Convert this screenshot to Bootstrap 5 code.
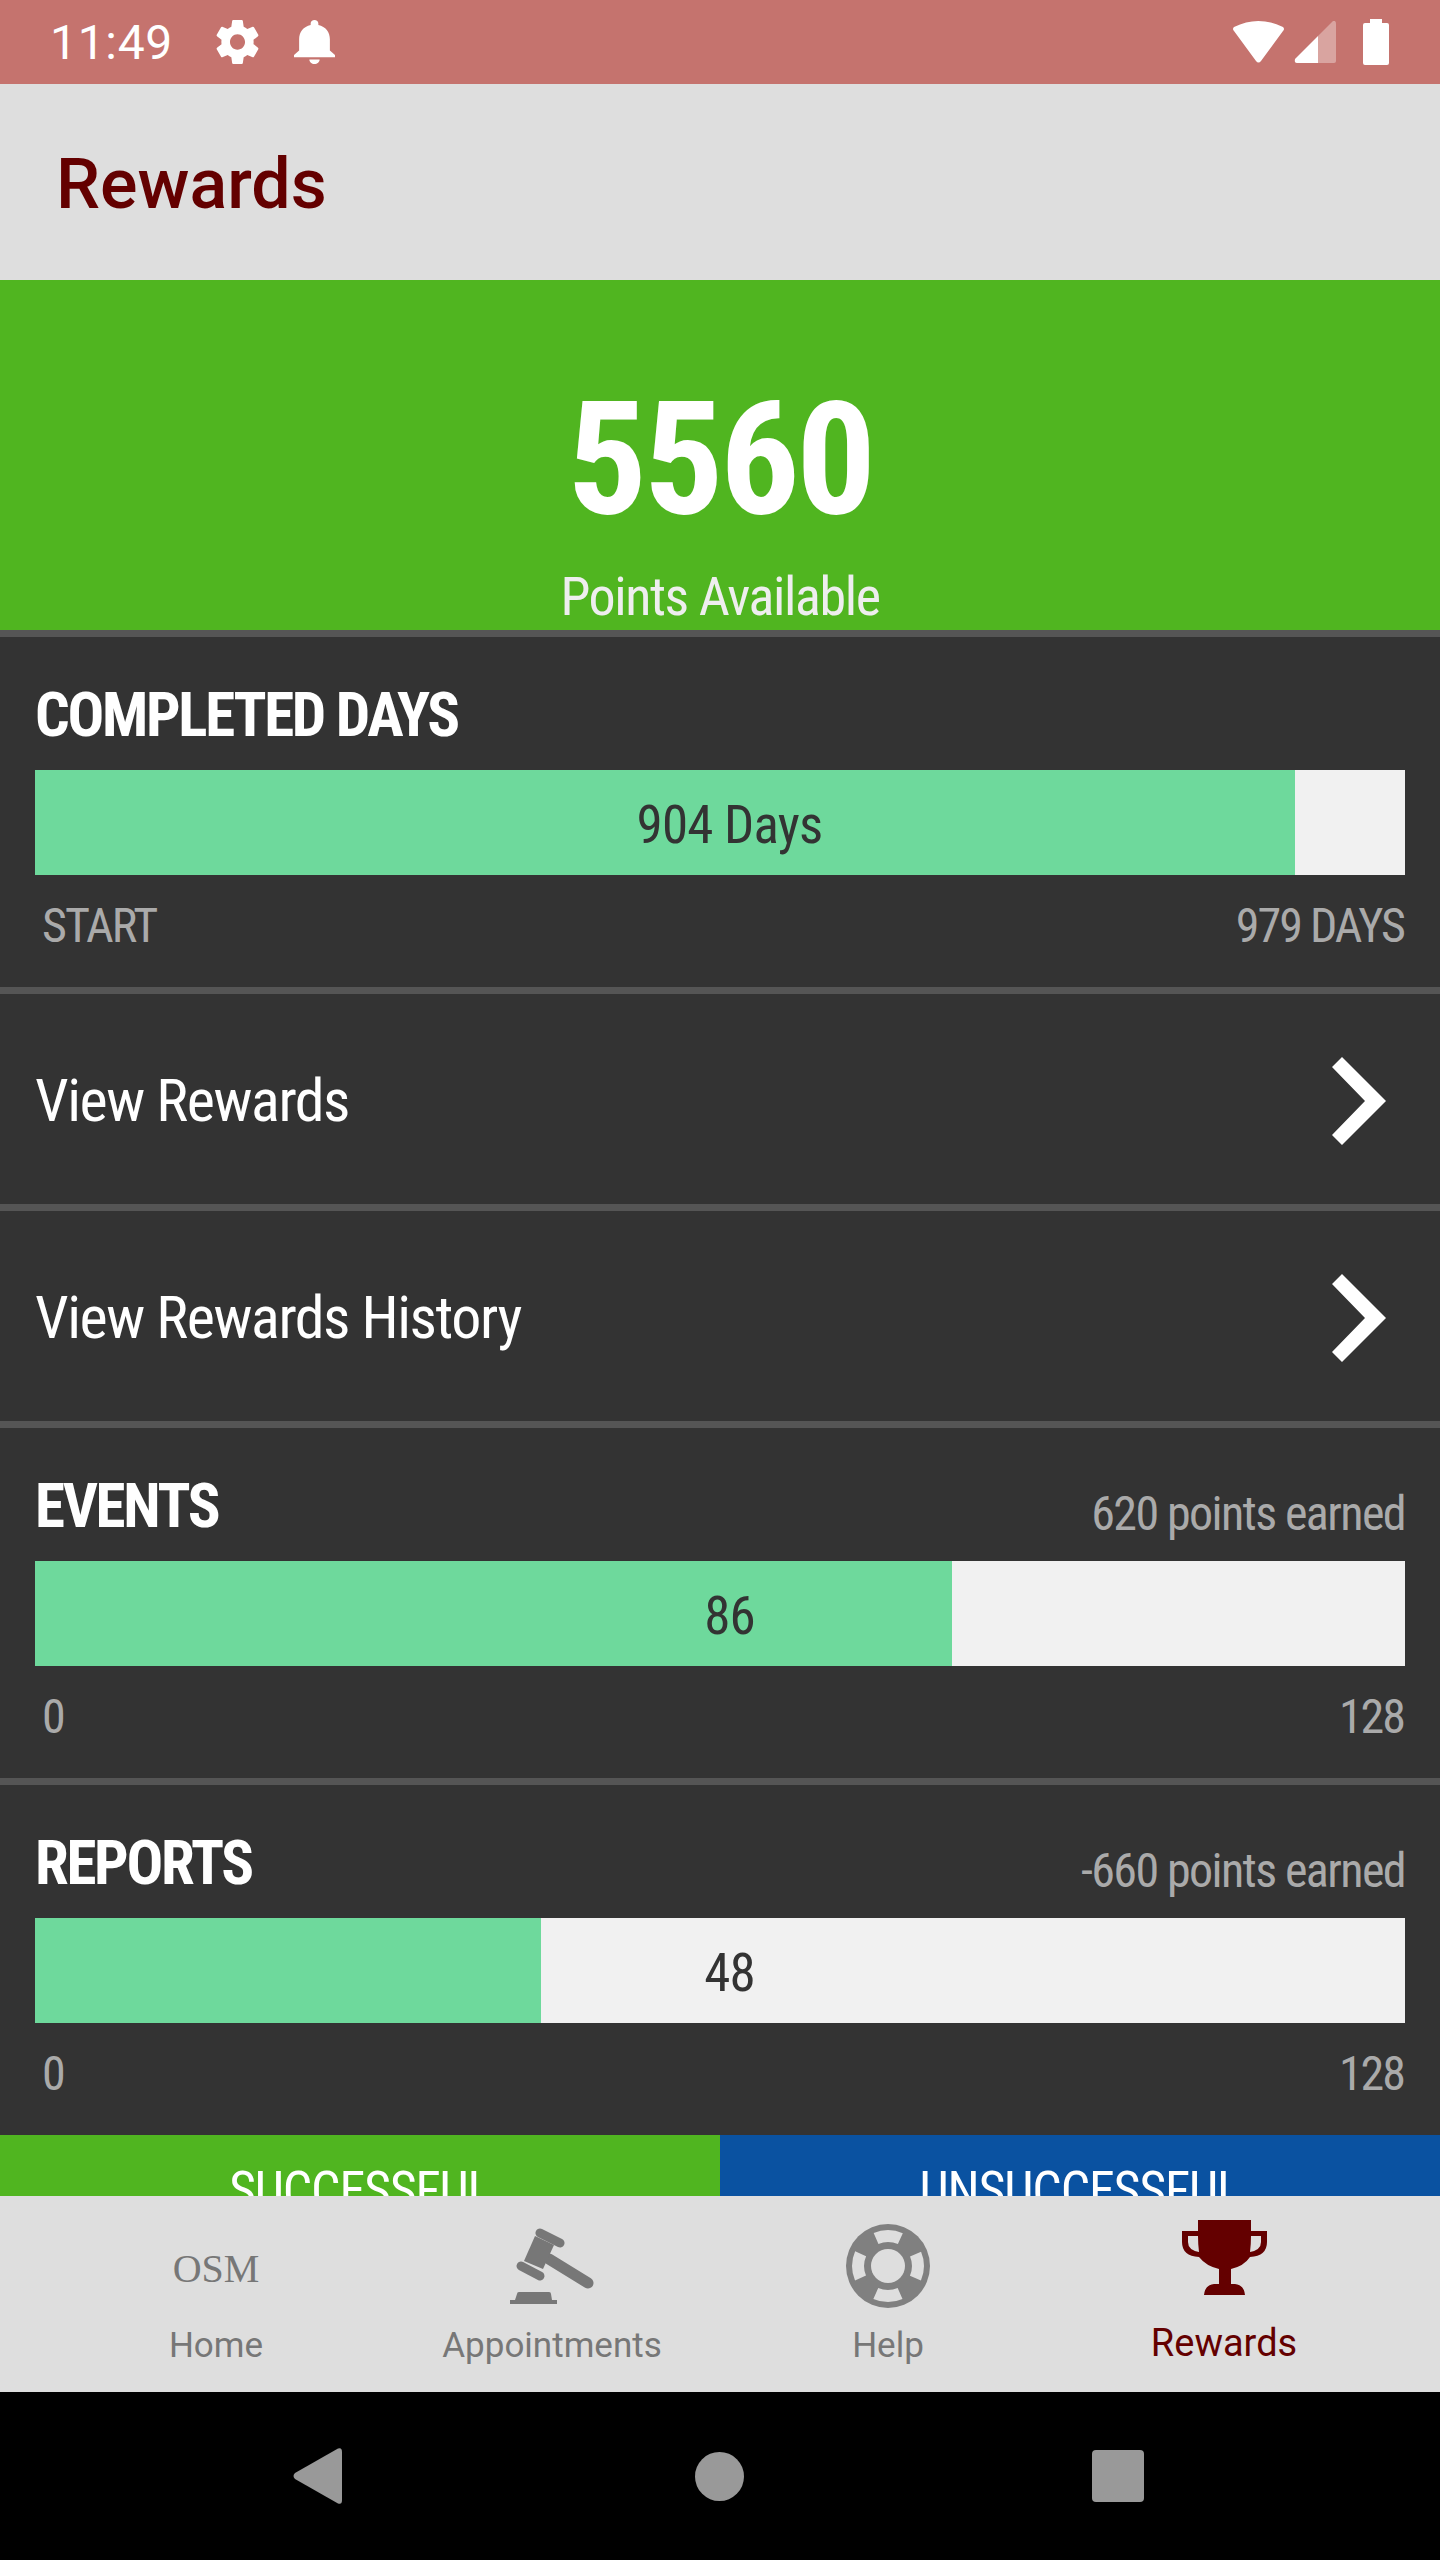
<!DOCTYPE html>
<html lang="en"><head><meta charset="utf-8"><title>Rewards</title>
<link href="https://cdn.jsdelivr.net/npm/bootstrap@5.3.0/dist/css/bootstrap.min.css" rel="stylesheet">
<style>
html,body{margin:0;height:2560px;overflow:hidden;background:#000}
body{font-family:"Roboto",sans-serif;width:1440px}
.rc{font-stretch:75%}
.shell{height:2560px;width:1440px}
.statusbar{height:84px;background:#c5736e;color:#fff;padding:0 51px 0 50px;flex:none}
.clock{font-size:48px;line-height:84px;letter-spacing:.7px;width:166px;padding-top:1px}
.ic-gear{width:43px;height:44px;margin-right:35px}
.ic-bell{width:41px;height:44px}
.ic-wifi{width:53px;height:42px;margin-right:9px}
.ic-signal{width:42px;height:42px;margin-right:27px}
.ic-batt{width:26px;height:46px}
.appbar{height:196px;background:#dedede;color:#640000;font-size:70px;padding:5px 0 0 56px;font-weight:500;font-stretch:89%;flex:none}
.mainscroll{height:1916px;overflow:hidden;background:#333;flex:none}
.hero{height:350px;background:#50b520;color:#fff;padding-top:100px}
.heronum{font-size:158px;font-weight:700;line-height:1;letter-spacing:-3.5px}
.herolab{font-size:54px;line-height:1;margin-top:32px;letter-spacing:-1.4px;color:#eee}
.sect{border-top:7px solid #555;background:#333;color:#fff;padding:0 35px}
.sect-meter{height:357px}
.sect-link{height:217px;font-size:60px;letter-spacing:-1.4px;padding-top:4px}
.sect-h{font-size:61px;font-weight:700;height:133px;padding-top:42px;line-height:72px;letter-spacing:-2.3px}
.sect-side{font-size:48px;color:#aaa;font-weight:400;letter-spacing:-1.6px;line-height:72px;margin-top:8px}
.meter{height:105px;background:#f1f1f1;color:#333;font-size:53px;letter-spacing:-.8px}
.meter-fill{background:#6ed99c}
.meter-val{line-height:105px;left:0;right:0;top:3px;padding-left:19px}
.scale{font-size:48px;color:#aaa;padding:20px 1px 0 7px;line-height:62px;letter-spacing:-2px}
.ic-chev{width:54px;height:88px;margin-right:19px}
.splitrow{height:61px;overflow:hidden;flex:none}
.splitbtn{color:#fff;font-size:52px;padding-top:23px;line-height:66px;letter-spacing:-1.2px}
.sb-g{background:#50b520}.sb-b{background:#0a52a1}
.tabbar{height:196px;background:#dedede;color:#777;font-size:35px;padding:0 48px;flex:none}
.tabcell{width:336px;padding-top:28px}
.tabicon{height:84px}
.tablabel{line-height:48px;margin-top:14px}
.tabon{color:#640000;padding-top:24px}
.tabon .tablabel{font-size:38px;margin-top:15px}
.osm{font-family:"Liberation Serif",serif;font-size:40px;padding-top:6px}
.ic-gavel{width:85px;height:76px}
.ic-help{width:84px;height:84px}
.ic-trophy{width:85px;height:75px;margin-bottom:9px}
.navbarx{height:168px;background:#000;flex:none;padding-left:293px}
.ic-back{width:49px;height:56px}
.ic-home{width:49px;height:49px;margin-left:353px}
.ic-recent{width:52px;height:52px;margin-left:348px}
</style></head><body>
<div class="shell d-flex flex-column">
<div class="statusbar d-flex align-items-center">
<span class="clock">11:49</span>
<svg class="ic-gear" viewBox="2 2 20 20" preserveAspectRatio="none"><path fill="#fff" d="M19.43 12.98c.04-.32.07-.64.07-.98s-.03-.66-.07-.98l2.11-1.65c.19-.15.24-.42.12-.64l-2-3.46c-.12-.22-.39-.3-.61-.22l-2.49 1c-.52-.4-1.08-.73-1.69-.98l-.38-2.65C14.46 2.18 14.25 2 14 2h-4c-.25 0-.46.18-.49.42l-.38 2.65c-.61.25-1.17.59-1.69.98l-2.49-1c-.23-.09-.49 0-.61.22l-2 3.46c-.13.22-.07.49.12.64l2.11 1.65c-.04.32-.07.65-.07.98s.03.66.07.98l-2.11 1.65c-.19.15-.24.42-.12.64l2 3.46c.12.22.39.3.61.22l2.49-1c.52.4 1.08.73 1.69.98l.38 2.65c.03.24.24.42.49.42h4c.25 0 .46-.18.49-.42l.38-2.65c.61-.25 1.17-.59 1.69-.98l2.49 1c.23.09.49 0 .61-.22l2-3.46c.12-.22.07-.49-.12-.64l-2.01-1.65zM12 15.5c-1.93 0-3.5-1.57-3.5-3.5s1.57-3.5 3.5-3.5 3.5 1.57 3.5 3.5-1.57 3.5-3.5 3.5z"/></svg>
<svg class="ic-bell" viewBox="4 2.5 16 19.5" preserveAspectRatio="none"><path fill="#fff" d="M12 22c1.1 0 2-.9 2-2h-4c0 1.1.9 2 2 2zm6-6v-5c0-3.07-1.63-5.64-4.5-6.32V4c0-.83-.67-1.5-1.5-1.5s-1.5.67-1.5 1.5v.68C7.64 5.36 6 7.92 6 11v5l-2 2v1h16v-1l-2-2z"/></svg>
<div class="ms-auto d-flex align-items-center">
<svg class="ic-wifi" viewBox="0 0 53 42"><path fill="#fff" d="M2 6Q26-6 51 6Q53 8 51 10L29 40Q26.500 43 24 40L2 10Q0 8 2 6Z"/></svg>
<svg class="ic-signal" viewBox="0 0 42 42"><path fill="#fff" d="M1 38L24 15V42H3Q0 42 1 38Z"/><path fill="#fff" opacity=".35" d="M24 15L39 0Q42-1 42 3V40Q42 42 40 42H24Z"/></svg>
<svg class="ic-batt" viewBox="0 0 26 46"><path fill="#fff" d="M7 0H19V4H24Q26 4 26 6V44Q26 46 24 46H2Q0 46 0 44V6Q0 4 2 4H7Z"/></svg>
</div>
</div>
<div class="appbar d-flex align-items-center"><span>Rewards</span></div>
<div class="mainscroll rc">
<div class="hero text-center"><div class="heronum">5560</div><div class="herolab">Points Available</div></div>

<div class="sect sect-meter"><div class="sect-h">COMPLETED DAYS</div>
<div class="meter position-relative d-flex"><div class="meter-fill" style="width:92%"></div><div class="meter-val position-absolute text-center">904 Days</div></div>
<div class="scale d-flex justify-content-between"><span>START</span><span>979 DAYS</span></div></div>

<div class="sect sect-link d-flex align-items-center justify-content-between"><span>View Rewards</span>
<svg class="ic-chev" viewBox="0 0 54 88"><path fill="#fff" d="M10 0L54 44L10 88L0 78L33 44L0 10Z"/></svg></div>
<div class="sect sect-link d-flex align-items-center justify-content-between"><span>View Rewards History</span>
<svg class="ic-chev" viewBox="0 0 54 88"><path fill="#fff" d="M10 0L54 44L10 88L0 78L33 44L0 10Z"/></svg></div>

<div class="sect sect-meter"><div class="sect-h d-flex justify-content-between align-items-start"><span>EVENTS</span><span class="sect-side">620 points earned</span></div>
<div class="meter position-relative d-flex"><div class="meter-fill" style="width:66.9%"></div><div class="meter-val position-absolute text-center">86</div></div>
<div class="scale d-flex justify-content-between"><span>0</span><span>128</span></div></div>

<div class="sect sect-meter"><div class="sect-h d-flex justify-content-between align-items-start"><span>REPORTS</span><span class="sect-side">-660 points earned</span></div>
<div class="meter position-relative d-flex"><div class="meter-fill" style="width:36.9%"></div><div class="meter-val position-absolute text-center">48</div></div>
<div class="scale d-flex justify-content-between"><span>0</span><span>128</span></div></div>

<div class="splitrow row g-0 text-center"><div class="col-6 sb-g splitbtn">SUCCESSFUL</div><div class="col-6 sb-b splitbtn">UNSUCCESSFUL</div></div>
</div>

<div class="tabbar d-flex">
<div class="tabcell text-center"><div class="tabicon d-flex align-items-center justify-content-center osm">OSM</div><div class="tablabel">Home</div></div>
<div class="tabcell text-center"><div class="tabicon d-flex align-items-center justify-content-center">
<svg class="ic-gavel" viewBox="0 0 85 76"><g stroke="#777" stroke-linecap="round" fill="none"><path stroke-width="9" d="M30 5L50 15"/><path stroke-width="9" d="M11 38L30 48"/><path stroke-width="11" d="M39 31L78 55"/></g><path fill="#777" d="M25 8L44 17L33 41L14 33Z"/><path fill="#777" d="M7 66Q7 64 9 64H39Q41 64 41 66L42 72H47V76H0V72H5Z"/></svg></div><div class="tablabel">Appointments</div></div>
<div class="tabcell text-center"><div class="tabicon d-flex align-items-center justify-content-center">
<svg class="ic-help" viewBox="0 0 84 84"><circle cx="42" cy="42" r="42" fill="#808080"/><circle cx="42" cy="42" r="30" fill="none" stroke="#dedede" stroke-width="12" stroke-dasharray="25 22.12" stroke-dashoffset="12.5"/><circle cx="42" cy="42" r="17" fill="#dedede"/></svg></div><div class="tablabel">Help</div></div>
<div class="tabcell tabon text-center"><div class="tabicon d-flex align-items-center justify-content-center">
<svg class="ic-trophy" viewBox="0 0 85 75"><path fill="#640000" fill-rule="evenodd" d="M16 0H69V11H85V22Q85 36 68 37Q62 46 49 49V64H53Q62 65 63 75H22Q23 65 32 64H37V49Q24 46 17 37Q0 36 0 22V11H16ZM6 16V22Q6 30 17 32Q16 24 16 16ZM79 16V22Q79 30 68 32Q69 24 69 16Z"/></svg></div><div class="tablabel">Rewards</div></div>
</div>

<div class="navbarx d-flex align-items-center">
<svg class="ic-back" viewBox="0 0 49 56"><path fill="#999" d="M45 .5Q49-1 49 4V52Q49 57 45 55.500L2 31Q-1 28 2 25Z"/></svg>
<svg class="ic-home" viewBox="0 0 49 49"><circle cx="24.500" cy="24.500" r="24.500" fill="#999"/></svg>
<svg class="ic-recent" viewBox="0 0 52 52"><rect width="52" height="52" rx="4" fill="#999"/></svg>
</div>
</div>
</body></html>
